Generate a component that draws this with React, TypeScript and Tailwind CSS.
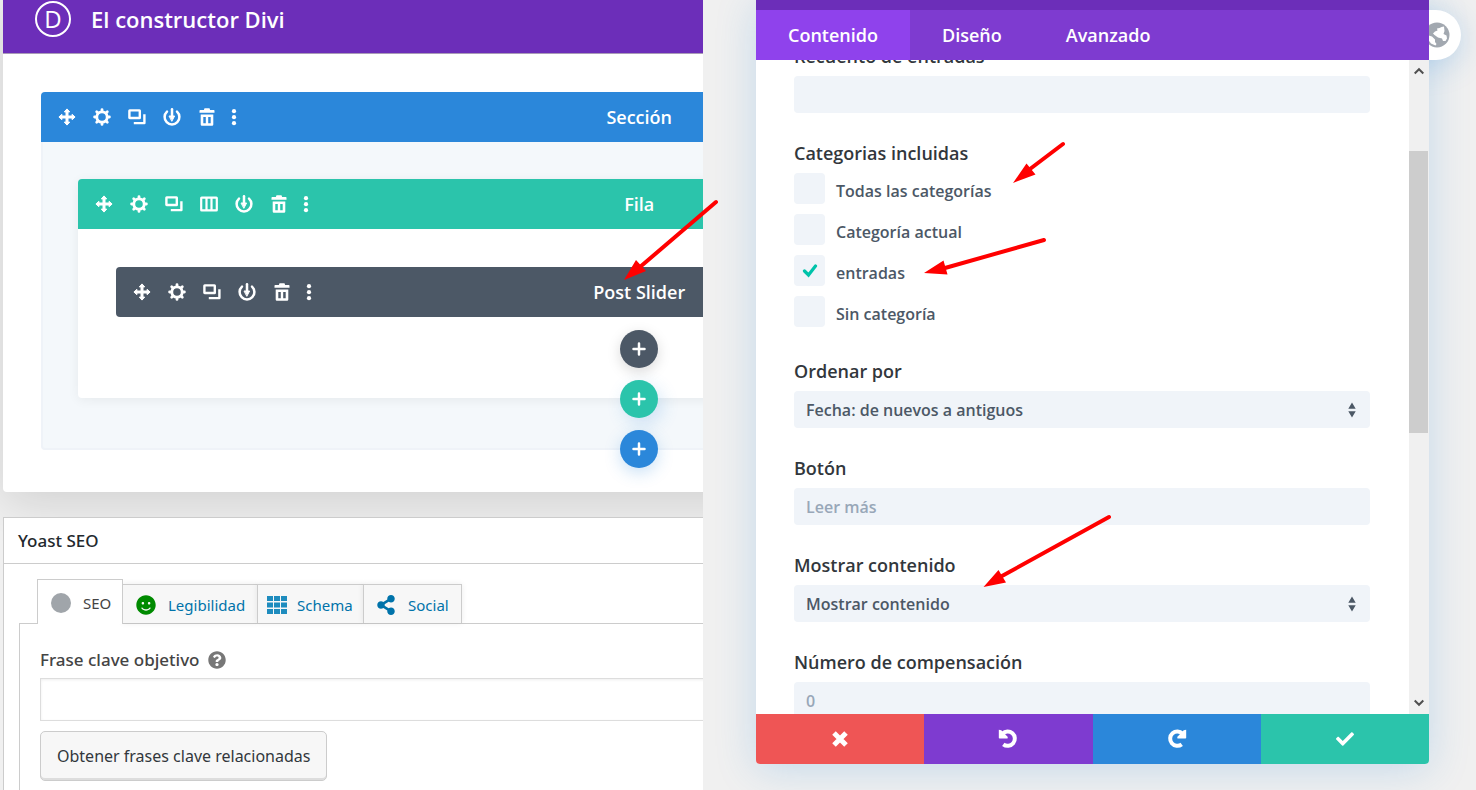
import type { ReactNode } from "react";
import { FaCheck, FaShareAlt, FaQuestionCircle, FaSmile } from "react-icons/fa";

function MoveIcon() {
  return (
    <svg width="18" height="18" viewBox="0 0 18 18" fill="currentColor" stroke="currentColor" strokeLinejoin="round">
      <path d="M9 0.900l2.700 3h-1.700v4.100h4.100V6.300l3 2.700-3 2.700v-1.700h-4.100v4.100h1.700L9 17.100l-2.700-3h1.700v-4.100H3.900v1.700L0.900 9l3-2.700v1.700h4.100V3.900H6.300z" />
    </svg>
  );
}

function GearIcon() {
  return (
    <svg width="18" height="18" viewBox="0 0 18 18" fill="none" stroke="currentColor">
      <circle cx="9" cy="9" r="5.200" strokeWidth="2.800" />
      <path
        strokeWidth="2.800"
        strokeLinecap="round"
        d="M9 1.600v1.700M9 14.700v1.700M1.600 9h1.700M14.700 9h1.700M3.700 3.700l1.300 1.300M13 13l1.300 1.300M14.300 3.700L13 5M5 13l-1.300 1.300"
      />
    </svg>
  );
}

function CloneIcon() {
  return (
    <svg width="18" height="18" viewBox="0 0 18 18" fill="none" stroke="currentColor" strokeWidth="2.400">
      <rect x="1.400" y="2.400" width="10.400" height="7.600" rx="0.300" />
      <path d="M16.400 6.200v8.900H5.800" strokeLinejoin="round" />
    </svg>
  );
}

function ColumnsIcon() {
  return (
    <svg width="18" height="18" viewBox="0 0 18 18" fill="none" stroke="currentColor" strokeWidth="2.200">
      <rect x="1.200" y="2.600" width="15.600" height="12.800" rx="0.500" />
      <path d="M6.500 2v13M11.500 2v13" />
    </svg>
  );
}

function PowerIcon() {
  return (
    <svg width="18" height="18" viewBox="0 0 18 18" fill="none" stroke="currentColor" strokeWidth="2.500" strokeLinecap="round">
      <path d="M4 3.600a7.400 7.400 0 1 0 10 0" />
      <path d="M9 1.200v8" />
      <path d="M6.400 8h5.200L9 13z" strokeWidth="1" fill="currentColor" strokeLinejoin="round" />
    </svg>
  );
}

function TrashIcon() {
  return (
    <svg width="18" height="18" viewBox="0 0 18 18" fill="currentColor">
      <path d="M6.500 0.200h5l0.600 1.800h3.700a0.700 0.700 0 0 1 0.700 0.700v2.100h-15V2.700a0.700 0.700 0 0 1 0.700-0.700h3.700z" />
      <path
        fillRule="evenodd"
        d="M2.700 6.500h12.600v10a1.200 1.200 0 0 1-1.200 1.200H3.900a1.200 1.200 0 0 1-1.200-1.200zM5.300 9v6.200h2.500V9zM10.200 9v6.200h2.500V9z"
      />
    </svg>
  );
}

function DotsIcon() {
  return (
    <svg width="6" height="18" viewBox="0 0 6 18" fill="currentColor">
      <circle cx="3" cy="3.200" r="2.100" />
      <circle cx="3" cy="9.200" r="2.100" />
      <circle cx="3" cy="15.200" r="2.100" />
    </svg>
  );
}

function GlobeIcon() {
  return (
    <svg width="26" height="26" viewBox="0 0 26 26">
      <circle cx="13" cy="13" r="12.500" fill="#a2a8b0" />
      <path
        fill="#fff"
        d="M17.500 5l2.500-.5.500 4.500-1 3 3 1.500.5 3-1.500 2.500h-2.500l-1-2.500-4-1-3.500-2.500-1.500-1.500 2-2 2.500-1-.5-2 2.500-.5z"
      />
      <path fill="#fff" d="M3 13l5 1.500 3 3v2.500l1.500 2-1 1.500-4.500-2-3-4z" />
    </svg>
  );
}

function UndoIcon({ flip = false }: { flip?: boolean }) {
  return (
    <svg width="20" height="20" viewBox="0 0 20 20" className={flip ? "-scale-x-100" : ""}>
      <path d="M4.500 4.600A7.200 7.200 0 1 1 5.300 15.400" fill="none" stroke="currentColor" strokeWidth="4" />
      <path fill="currentColor" d="M0.800 0.800l2.500.5 6.500 6.700-.3 1.500H1.600a0.800 0.800 0 0 1-.8-.8z" />
    </svg>
  );
}

function CrossIcon() {
  return (
    <svg width="16" height="16" viewBox="0 0 16 16" stroke="currentColor" strokeWidth="5">
      <path d="M2 2l12 12M14 2L2 14" />
    </svg>
  );
}

function Toolbar({ title, color, columns = false }: { title: string; color: string; columns?: boolean }) {
  const button = "flex h-9 w-[35px] items-center justify-center";
  return (
    <div className={`grid h-[50px] shrink-0 grid-cols-[1fr_auto_1fr] items-center px-2 text-white ${color}`}>
      <div className="flex items-center">
        <button className={button} aria-label="Mover"><MoveIcon /></button>
        <button className={button} aria-label="Ajustes"><GearIcon /></button>
        <button className={button} aria-label="Duplicar"><CloneIcon /></button>
        {columns && <button className={button} aria-label="Columnas"><ColumnsIcon /></button>}
        <button className={button} aria-label="Guardar"><PowerIcon /></button>
        <button className={button} aria-label="Eliminar"><TrashIcon /></button>
        <button className="flex h-9 w-5 items-center justify-center" aria-label="Más"><DotsIcon /></button>
      </div>
      <h3 className="text-[18px] font-semibold">{title}</h3>
    </div>
  );
}

function AddButton({ className }: { className: string }) {
  return (
    <button
      aria-label="Añadir"
      className={`relative z-10 mx-auto flex size-[38px] items-center justify-center rounded-full text-white ${className}`}
    >
      <svg width="14" height="14" viewBox="0 0 14 14" stroke="currentColor" strokeWidth="2.500" strokeLinecap="round">
        <path d="M7 1.500v11M1.500 7h11" />
      </svg>
    </button>
  );
}

function Builder() {
  return (
    <section className="rounded-b bg-white pb-[42px] shadow-[0_10px_50px_rgba(0,0,0,0.14)]">
      <header className="flex h-[54px] items-center gap-5 border-b border-[#a99bb8] bg-[#6c2eb9] pb-4 pl-8 text-white">
        <span className="flex size-9 items-center justify-center rounded-full border-2 border-white text-[24px] leading-none">
          D
        </span>
        <h2 className="text-[22px] font-semibold leading-none">El constructor Divi</h2>
      </header>

      <div className="mx-[38px] mt-[38px]">
        <Toolbar title="Sección" color="rounded-t bg-[#2b87da]" />
        <div className="flow-root rounded-b border-x-2 border-b-2 border-[#eff3f8] bg-[#f4f8fb] px-[35px] pt-[37px]">
          <div className="flow-root rounded bg-white shadow-[0_2px_12px_rgba(0,0,0,0.06)]">
            <Toolbar title="Fila" color="rounded-t bg-[#2bc4ab]" columns />
            <div className="px-[38px] pt-[38px]">
              <Toolbar title="Post Slider" color="rounded bg-[#4c5866]" />
            </div>
            <AddButton className="mt-[13px] bg-[#4c5866] shadow-[0_4px_14px_rgba(0,0,0,0.15)]" />
            <AddButton className="-mb-5 mt-3 bg-[#2bc4ab] shadow-[4px_6px_18px_rgba(43,135,218,0.2)]" />
          </div>
          <AddButton className="-mb-5 mt-8 bg-[#2b87da] shadow-[0_5px_16px_rgba(43,135,218,0.25)]" />
        </div>
      </div>
    </section>
  );
}

const tab =
  "-ml-px flex h-[39px] items-center border border-b-0 border-[#ccc] bg-[#f7f7f7] pt-0.5 text-[15px] text-[#0073aa] shadow-[0_0_6px_rgba(0,0,0,0.08)]";

function YoastBox() {
  return (
    <section className="relative mt-[25px] flex-1 border border-b-0 border-[#ccc] bg-white font-['Noto_Sans',sans-serif]">
      <h2 className="flex h-[46px] items-center border-b border-[#ccc] pl-[14px] text-[17px] font-medium text-[#23282d]">
        Yoast SEO
      </h2>
      <div className="ml-[15px] pt-[15px]">
        <nav className="flex items-end pl-[18px]">
          <a
            href="#seo"
            className="relative z-10 -mb-px flex h-[45px] w-[86px] items-center gap-3 border border-b-0 border-[#ccc] bg-white pl-[13px] pt-0.5 text-[15px] text-[#444]"
          >
            <span className="size-5 shrink-0 rounded-full bg-[#a0a5aa]" />
            SEO
          </a>
          <a href="#legibilidad" className={`${tab} w-[136px] gap-3 pl-[13px]`}>
            <FaSmile className="size-5 shrink-0 text-[#008a00]" />
            Legibilidad
          </a>
          <a href="#schema" className={`${tab} w-[107px] gap-[10px] pl-[9px]`}>
            <svg width="20" height="18" viewBox="0 0 20 18" fill="#1e8cbe" className="shrink-0">
              <path d="M0 0h6v5H0zM7 0h6v5H7zM14 0h6v5h-6zM0 6.500h6v5H0zM7 6.500h6v5H7zM14 6.500h6v5h-6zM0 13h6v5H0zM7 13h6v5H7zM14 13h6v5h-6z" />
            </svg>
            Schema
          </a>
          <a href="#social" className={`${tab} w-[99px] gap-3 pl-3`}>
            <FaShareAlt className="size-5 shrink-0" />
            Social
          </a>
        </nav>
        <div className="border-l border-t border-[#ccc] pb-[10px] pl-5 pt-6 text-[#444]">
          <div className="flex h-6 items-center gap-2">
            <label htmlFor="keyphrase" className="text-[17px] font-medium">Frase clave objetivo</label>
            <FaQuestionCircle className="size-[18px] text-[#777]" />
          </div>
          <input
            id="keyphrase"
            className="mt-1.5 block h-[43px] w-full border border-[#ddd] px-3 text-base shadow-[inset_0_1px_3px_rgba(0,0,0,0.07)] outline-none"
          />
          <button className="mt-[10px] h-[50px] rounded-[5px] border border-[#ccc] bg-[#f7f7f7] px-4 text-[16px] text-[#32373c] shadow-[inset_0_-2px_0_#ddd]">
            Obtener frases clave relacionadas
          </button>
        </div>
      </div>
    </section>
  );
}

const control =
  "block h-[37px] w-full appearance-none rounded bg-[#f0f4f9] px-3 text-[16px] font-semibold text-[#4c5866] outline-none placeholder:text-[#98a7b8]";

function Field({ id, label, children }: { id: string; label: string; children: ReactNode }) {
  return (
    <div>
      <label htmlFor={id} className="mb-2 block text-[18px] font-semibold leading-6 text-[#32373c]">
        {label}
      </label>
      {children}
    </div>
  );
}

function Select({ id, value }: { id: string; value: string }) {
  return (
    <div className="relative">
      <select id={id} className={control}>
        <option>{value}</option>
      </select>
      <svg
        width="8"
        height="16"
        viewBox="0 0 8 16"
        fill="#4c5866"
        className="pointer-events-none absolute right-[14px] top-[11px]"
      >
        <path d="M4 0.500L7.700 6.700H0.300zM4 15.500L0.300 9.300h7.400z" />
      </svg>
    </div>
  );
}

const categories = [
  { name: "Todas las categorías", checked: false },
  { name: "Categoría actual", checked: false },
  { name: "entradas", checked: true },
  { name: "Sin categoría", checked: false },
];

function Categories() {
  return (
    <fieldset className="pb-1">
      <legend className="mb-2 text-[18px] font-semibold leading-6 text-[#32373c]">Categorias incluidas</legend>
      <div className="flex flex-col gap-[10px]">
        {categories.map((c) => (
          <label key={c.name} className="flex items-start gap-[11px] text-[16px] font-semibold text-[#4c5866]">
            <span className="grid size-[31px] place-items-center rounded bg-[#f0f4f9]">
              <input
                type="checkbox"
                defaultChecked={c.checked}
                className="peer col-start-1 row-start-1 size-[31px] appearance-none rounded"
              />
              <svg
                width="16"
                height="14"
                viewBox="0 0 16 14"
                fill="none"
                stroke="#00c3aa"
                strokeWidth="3.200"
                className="pointer-events-none invisible col-start-1 row-start-1 peer-checked:visible"
              >
                <path d="M2.500 7l4 4L13.500 2" strokeLinecap="round" />
              </svg>
            </span>
            <span className="pt-1.5 leading-6">{c.name}</span>
          </label>
        ))}
      </div>
    </fieldset>
  );
}

function Scrollbar() {
  return (
    <div className="flex w-5 shrink-0 flex-col items-center bg-[#f0f0f0] py-[7px] text-[#505050]">
      <svg width="10" height="8" viewBox="0 0 10 8" fill="none" stroke="currentColor" strokeWidth="2">
        <path d="M0.700 6.500L5 2.200l4.300 4.300" />
      </svg>
      <div className="mt-[76px] h-[44%] w-full border-r border-[#f0f0f0] bg-[#cdcdcd]" />
      <svg width="10" height="8" viewBox="0 0 10 8" fill="none" stroke="currentColor" strokeWidth="2" className="mt-auto">
        <path d="M0.700 1.500L5 5.800l4.300-4.300" />
      </svg>
    </div>
  );
}

function SettingsModal() {
  return (
    <div className="relative flex min-h-0 flex-1 flex-col">
      <button
        aria-label="Global"
        className="absolute -right-8 top-[10px] flex h-[50px] w-20 items-center justify-end rounded-full bg-white pr-[11px] shadow-[0_5px_30px_rgba(43,135,218,0.25)]"
      >
        <GlobeIcon />
      </button>
      <div className="relative flex min-h-0 flex-1 flex-col overflow-hidden rounded-b bg-white">
        <div className="h-[10px] shrink-0 bg-[#6c2eb9]" />
        <nav className="flex h-[50px] shrink-0 bg-[#7e3bd0] text-[18px] font-semibold text-white">
          <button className="bg-[#8f42ec] px-8">Contenido</button>
          <button className="px-8">Diseño</button>
          <button className="px-8">Avanzado</button>
        </nav>
        <div className="flex min-h-0 flex-1">
          <div className="min-w-0 flex-1 overflow-hidden pl-[38px] pr-[39px]">
            <form className="-mt-4 flex flex-col gap-7">
              <Field id="count" label="Recuento de entradas">
                <input id="count" className={control} />
              </Field>
              <Categories />
              <Field id="order" label="Ordenar por">
                <Select id="order" value="Fecha: de nuevos a antiguos" />
              </Field>
              <Field id="button" label="Botón">
                <input id="button" placeholder="Leer más" className={control} />
              </Field>
              <Field id="content" label="Mostrar contenido">
                <Select id="content" value="Mostrar contenido" />
              </Field>
              <Field id="offset" label="Número de compensación">
                <input id="offset" placeholder="0" className={control} />
              </Field>
            </form>
          </div>
          <Scrollbar />
        </div>
        <footer className="grid h-[50px] shrink-0 grid-cols-4 text-white">
          <button aria-label="Descartar" className="flex items-center justify-center bg-[#ef5555]"><CrossIcon /></button>
          <button aria-label="Deshacer" className="flex items-center justify-center bg-[#7e3bd0]"><UndoIcon /></button>
          <button aria-label="Rehacer" className="flex items-center justify-center bg-[#2b87da]"><UndoIcon flip /></button>
          <button aria-label="Guardar" className="flex items-center justify-center bg-[#2bc4ab]"><FaCheck size={18} /></button>
        </footer>
      </div>
    </div>
  );
}

function Arrows() {
  return (
    <svg
      viewBox="0 0 1476 790"
      className="pointer-events-none absolute inset-0 z-30 size-full"
      fill="#f00"
      stroke="#f00"
      strokeWidth="4"
      strokeLinecap="round"
    >
      <path d="M716 202L640 267M1063 144L1030 169M1044 240L945 268M1109 517L1002 576" />
      <path stroke="none" d="M624 280l12-20 10 11zM1013 183l13.500-19.500 9 11zM924 273l19.500-12.500 4 14zM983.500 587l15-17 7.500 12.500z" />
    </svg>
  );
}

export default function App() {
  return (
    <div className="relative grid h-screen grid-cols-[703fr_773fr] grid-rows-1 overflow-hidden bg-[#f0f0f0] font-['Open_Sans',sans-serif]">
      <main className="z-10 min-w-0 overflow-hidden">
        <div className="ml-[3px] flex h-full w-[181%] flex-col">
          <Builder />
          <YoastBox />
        </div>
      </main>
      <aside className="flex min-h-0 min-w-0 flex-col pb-[26px] pl-[53px] pr-[47px]">
        <div className="flex min-h-0 flex-1 flex-col rounded-b shadow-[0_5px_40px_rgba(43,135,218,0.22)]">
          <SettingsModal />
        </div>
      </aside>
      <Arrows />
    </div>
  );
}
